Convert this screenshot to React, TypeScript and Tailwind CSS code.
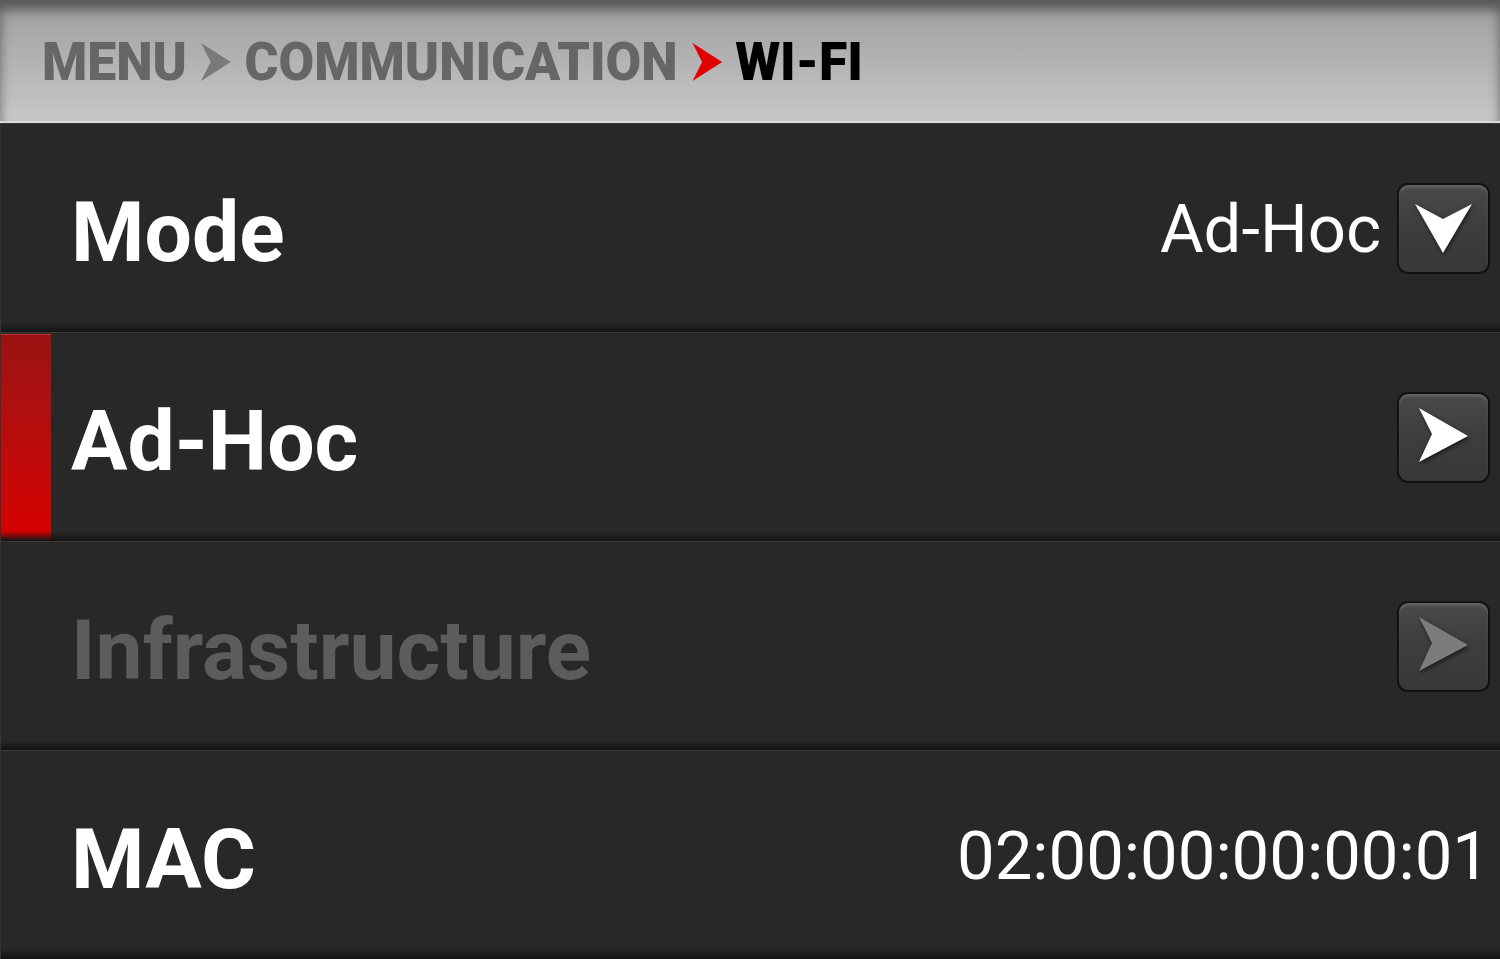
import React from 'react';

const font = "font-['Roboto',_'Liberation_Sans',_sans-serif]";

function Chevron({ red }: { red?: boolean }) {
  return (
    <svg width="34" height="40" viewBox="0 0 34 40" className="shrink-0">
      <polygon points="2,1 33,20 2,39 12,20" fill={red ? '#e10000' : '#7a7a7a'} />
    </svg>
  );
}

function SquareButton({ dir, dim }: { dir: 'down' | 'right'; dim?: boolean }) {
  const fill = dim ? '#7c7c7c' : '#ffffff';
  return (
    <div className="w-[93px] h-[91px] rounded-[11px] bg-[#111] p-[2px] shrink-0">
      <div className="w-full h-full rounded-[9px] bg-gradient-to-b from-[#4a4a4a] via-[#3d3d3d] to-[#383838] shadow-[inset_0_3px_2px_rgba(255,255,255,0.12)] flex items-center justify-center">
        <svg width="89" height="87" viewBox="0 0 89 87" className="drop-shadow-[1px_2px_2px_rgba(0,0,0,0.6)]">
          {dir === 'down' ? (
            <polygon points="16,19 44,34 73,19 44,68" fill={fill} />
          ) : (
            <polygon points="20,14 69,42 20,68 33,40" fill={fill} />
          )}
        </svg>
      </div>
    </div>
  );
}

function Row({
  label,
  value,
  button,
  selected,
  muted,
}: {
  label: string;
  value?: string;
  button?: React.ReactNode;
  selected?: boolean;
  muted?: boolean;
}) {
  return (
    <div className="relative h-[209px] flex items-stretch bg-[#282828] border-t border-[#3a3a3a] border-l border-l-[#333]">
      <div className="absolute inset-x-0 bottom-0 h-[10px] bg-gradient-to-b from-transparent to-[#141414]" />
      <div
        className={
          selected
            ? 'w-[50px] shrink-0 bg-gradient-to-b from-[#9a1212] to-[#d80000] border-t border-[#c03030] my-[1px]'
            : 'w-[50px] shrink-0'
        }
      />
      <div className="relative flex-1 flex items-center justify-between pl-[20px] pr-[10px]">
        <span
          className={`${font} font-bold text-[84px] leading-none pt-[10px] ${
            muted ? 'text-[#5c5c5c]' : 'text-white'
          }`}
        >
          {label}
        </span>
        <div className="flex items-center gap-[16px]">
          {value && (
            <span className={`${font} font-normal text-[67px] leading-none text-white pt-[3px]`}>{value}</span>
          )}
          {button}
        </div>
      </div>
    </div>
  );
}

export default function App() {
  return (
    <div className="w-[1500px] h-[959px] overflow-hidden bg-[#282828]">
      {/* breadcrumb header */}
      <div className="h-[123px] bg-gradient-to-b from-[#9e9e9e] to-[#c8c8c8] shadow-[inset_0_10px_12px_rgba(0,0,0,0.45)] border-b-[2px] border-[#dadada] flex items-center pl-[42px] pt-[2px]">
        <div className={`${font} font-black text-[54px] leading-none flex items-center gap-[13px] origin-left scale-x-[0.958]`}>
          <span className="text-[#666]">MENU</span>
          <Chevron />
          <span className="text-[#666]">COMMUNICATION</span>
          <Chevron red />
          <span className="text-black">WI-FI</span>
        </div>
      </div>

      <Row label="Mode" value="Ad-Hoc" button={<SquareButton dir="down" />} />
      <Row label="Ad-Hoc" selected button={<SquareButton dir="right" />} />
      <Row label="Infrastructure" muted button={<SquareButton dir="right" dim />} />
      <Row label="MAC" value="02:00:00:00:00:01" />
    </div>
  );
}
